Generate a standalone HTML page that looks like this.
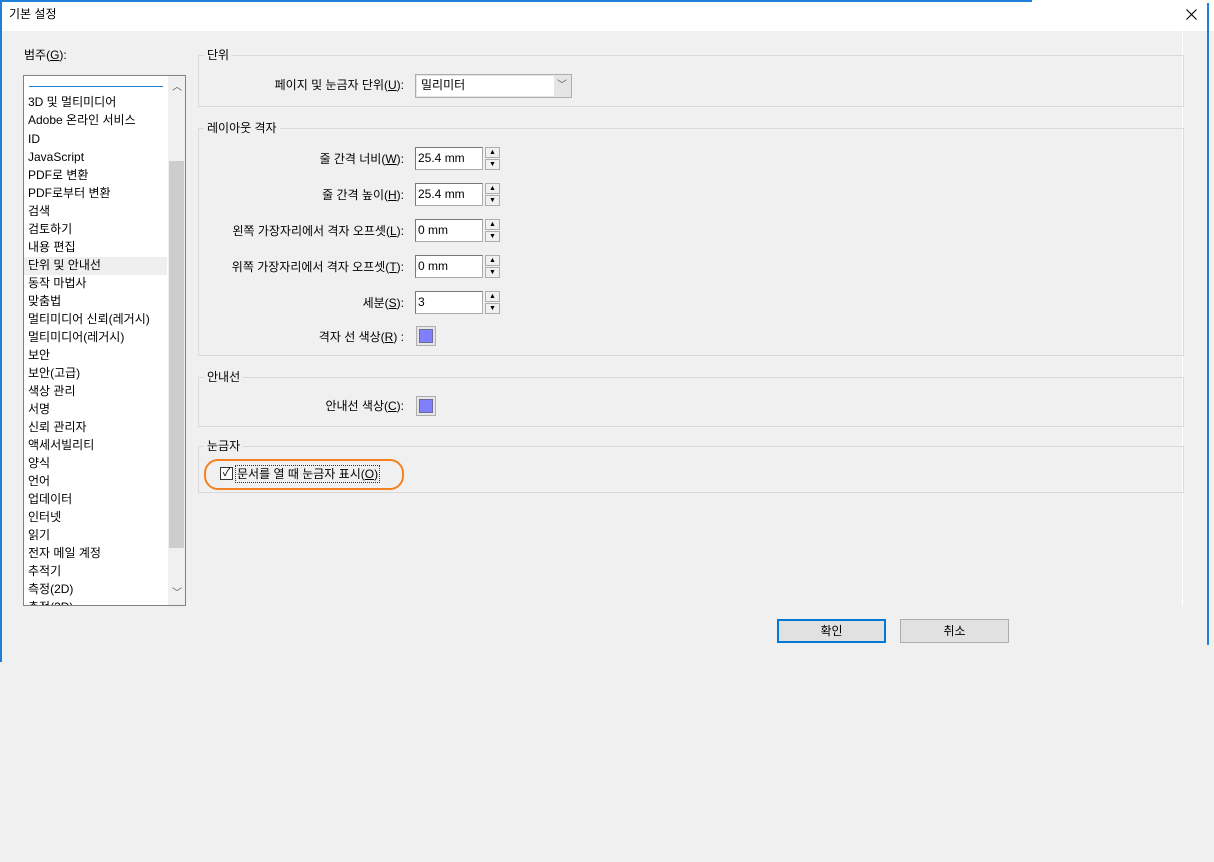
<!DOCTYPE html>
<html><head><meta charset="utf-8"><style>
*{margin:0;padding:0;box-sizing:border-box}
body{width:1214px;height:862px;background:#f0f0f0;position:relative;overflow:hidden;font-family:"Liberation Sans","Noto Sans CJK KR",sans-serif;font-size:12px;color:#000}
.a{position:absolute;white-space:nowrap;line-height:16px}
.title{position:absolute;left:0;top:0;width:1214px;height:31px;background:#fff}
.gb{position:absolute;border:1px solid #dadada;border-right-color:#dadada}
.gl{position:absolute;background:#f0f0f0;padding:0 3px;line-height:16px}
.lbl{position:absolute;right:0;text-align:right;white-space:nowrap;line-height:16px}
.inp{position:absolute;left:415px;width:68px;height:23px;background:#fff;border:1px solid #aaa;border-top-color:#777;border-left-color:#777;padding:2px 2px;line-height:16px}
.sp{position:absolute;left:485px;width:15px;height:23px;}
.sp div{height:11px;border:1px solid #adadad;background:#f0f0f0;font-size:7px;line-height:9px;text-align:center;margin-bottom:1px}
.sw{position:absolute;left:416px;width:20px;height:20px;border:1px solid #adadad;background:#e6e6e6;padding:2px}
.sw div{width:14px;height:14px;background:#8080ff;border:1px solid #6a6a9a}
u{text-decoration:underline}
.li{position:absolute;left:28px;line-height:18px;white-space:nowrap}
</style></head><body>
<div class="title"><div style="position:absolute;left:0;top:0;width:1032px;height:2px;background:#1e7fd6"></div><div class="a" style="left:9px;top:6px;font-size:12px">기본 설정</div>
<svg style="position:absolute;left:1186px;top:9px" width="11" height="11" viewBox="0 0 11 11"><path d="M0.5 0.5L10.5 10.5M10.5 0.5L0.5 10.5" stroke="#000" stroke-width="1.1"/></svg></div>
<div style="position:absolute;left:0;top:0;width:2px;height:662px;background:#1e7fd6"></div>
<div style="position:absolute;left:1207px;top:3px;width:2px;height:642px;background:#1e7fd6"></div>
<div style="position:absolute;left:1182px;top:31px;width:1px;height:575px;background:#fff"></div>

<div class="a" style="left:24px;top:47px">범주(<u>G</u>):</div>
<div style="position:absolute;left:23px;top:75px;width:163px;height:531px;background:#fff;border:1px solid #828282;overflow:hidden">
<div style="position:absolute;left:5px;top:10px;width:134px;height:1px;background:#1e7fd6"></div>
<div style="position:absolute;left:144px;top:0;width:17px;height:529px;background:#f0f0f0"></div>
<div style="position:absolute;left:145px;top:85px;width:15px;height:387px;background:#cdcdcd"></div>
<div class="a" style="left:148px;top:4px;font-size:10px;color:#555">︿</div>
<div class="a" style="left:148px;top:510px;font-size:10px;color:#555">﹀</div>
<div style="position:absolute;left:0;top:181px;width:143px;height:18px;background:#efefef"></div>
</div>
<div style="position:absolute;left:24px;top:76px;width:143px;height:529px;overflow:hidden">
<div class="li" style="top:17px;left:4px">3D 및 멀티미디어</div>
<div class="li" style="top:35px;left:4px">Adobe 온라인 서비스</div>
<div class="li" style="top:54px;left:4px">ID</div>
<div class="li" style="top:72px;left:4px">JavaScript</div>
<div class="li" style="top:90px;left:4px">PDF로 변환</div>
<div class="li" style="top:108px;left:4px">PDF로부터 변환</div>
<div class="li" style="top:126px;left:4px">검색</div>
<div class="li" style="top:144px;left:4px">검토하기</div>
<div class="li" style="top:162px;left:4px">내용 편집</div>
<div class="li" style="top:180px;left:4px">단위 및 안내선</div>
<div class="li" style="top:198px;left:4px">동작 마법사</div>
<div class="li" style="top:216px;left:4px">맞춤법</div>
<div class="li" style="top:234px;left:4px">멀티미디어 신뢰(레거시)</div>
<div class="li" style="top:252px;left:4px">멀티미디어(레거시)</div>
<div class="li" style="top:270px;left:4px">보안</div>
<div class="li" style="top:288px;left:4px">보안(고급)</div>
<div class="li" style="top:306px;left:4px">색상 관리</div>
<div class="li" style="top:324px;left:4px">서명</div>
<div class="li" style="top:342px;left:4px">신뢰 관리자</div>
<div class="li" style="top:360px;left:4px">액세서빌리티</div>
<div class="li" style="top:378px;left:4px">양식</div>
<div class="li" style="top:396px;left:4px">언어</div>
<div class="li" style="top:414px;left:4px">업데이터</div>
<div class="li" style="top:432px;left:4px">인터넷</div>
<div class="li" style="top:450px;left:4px">읽기</div>
<div class="li" style="top:468px;left:4px">전자 메일 계정</div>
<div class="li" style="top:486px;left:4px">추적기</div>
<div class="li" style="top:504px;left:4px">측정(2D)</div>
<div class="li" style="top:522px;left:4px">측정(3D)</div>
</div>

<div class="gb" style="left:198px;top:55px;width:986px;height:52px"></div>
<div class="gl" style="left:204px;top:47px">단위</div>
<div class="gb" style="left:198px;top:128px;width:986px;height:228px"></div>
<div class="gl" style="left:204px;top:120px">레이아웃 격자</div>
<div class="gb" style="left:198px;top:377px;width:986px;height:50px"></div>
<div class="gl" style="left:204px;top:369px">안내선</div>
<div class="gb" style="left:198px;top:446px;width:986px;height:47px"></div>
<div class="gl" style="left:204px;top:438px">눈금자</div>

<div style="position:absolute;left:0;top:0;width:404px;height:600px">
<div class="lbl" style="top:77px">페이지 및 눈금자 단위(<u>U</u>):</div>
<div class="lbl" style="top:151px">줄 간격 너비(<u>W</u>):</div>
<div class="lbl" style="top:187px">줄 간격 높이(<u>H</u>):</div>
<div class="lbl" style="top:223px">왼쪽 가장자리에서 격자 오프셋(<u>L</u>):</div>
<div class="lbl" style="top:259px">위쪽 가장자리에서 격자 오프셋(<u>T</u>):</div>
<div class="lbl" style="top:295px">세분(<u>S</u>):</div>
<div class="lbl" style="top:329px">격자 선 색상(<u>R</u>) :</div>
<div class="lbl" style="top:398px">안내선 색상(<u>C</u>):</div>
</div>

<div style="position:absolute;left:415px;top:74px;width:157px;height:24px;border:1px solid #adadad;background:#e5e5e5">
<div style="position:absolute;left:1px;top:1px;width:137px;height:20px;background:#fff;padding:1px 4px;line-height:17px">밀리미터</div>
<div class="a" style="left:141px;top:3px;font-size:10px;color:#555">﹀</div>
</div>

<div class="inp" style="top:147px">25.4 mm</div><div class="sp" style="top:147px"><div>▲</div><div>▼</div></div>
<div class="inp" style="top:183px">25.4 mm</div><div class="sp" style="top:183px"><div>▲</div><div>▼</div></div>
<div class="inp" style="top:219px">0 mm</div><div class="sp" style="top:219px"><div>▲</div><div>▼</div></div>
<div class="inp" style="top:255px">0 mm</div><div class="sp" style="top:255px"><div>▲</div><div>▼</div></div>
<div class="inp" style="top:291px">3</div><div class="sp" style="top:291px"><div>▲</div><div>▼</div></div>
<div class="sw" style="top:326px"><div></div></div>
<div class="sw" style="top:396px"><div></div></div>

<div style="position:absolute;left:204px;top:459px;width:200px;height:31px;border:2px solid #f58220;border-radius:14px"></div>
<div style="position:absolute;left:220px;top:467px;width:13px;height:13px;border:1px solid #333;background:#fff;font-size:11px;line-height:11px;text-align:center">✓</div>
<div class="a" style="left:235px;top:465px;border:1px dotted #333;padding:0 1px">문서를 열 때 눈금자 표시(<u>O</u>)</div>

<div style="position:absolute;left:777px;top:619px;width:109px;height:24px;border:2px solid #0078d7;background:#e1e1e1;text-align:center;line-height:20px">확인</div>
<div style="position:absolute;left:900px;top:619px;width:109px;height:24px;border:1px solid #adadad;background:#e1e1e1;text-align:center;line-height:22px">취소</div>
</body></html>
